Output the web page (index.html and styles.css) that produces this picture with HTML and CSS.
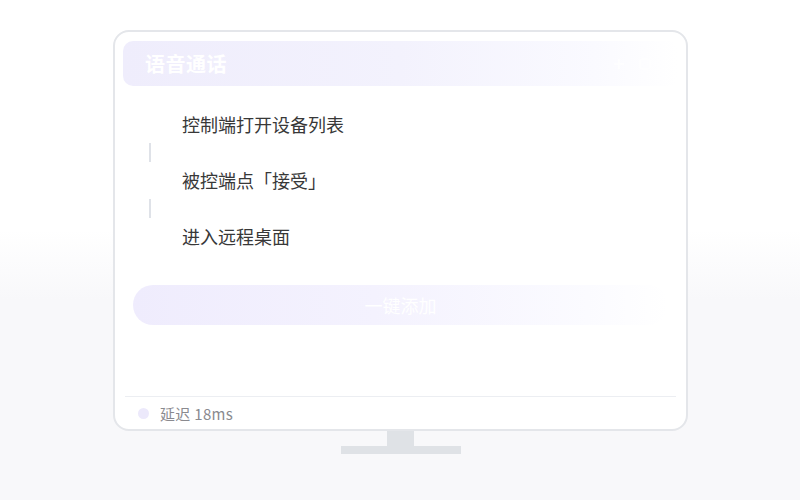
FILE: index.html
```html
<!DOCTYPE html>
<html lang="zh">
<head>
<meta charset="utf-8">
<link rel="stylesheet" href="styles.css">
</head>
<body>
<div class="scene">
  <div class="monitor">
    <div class="screen">
      <div class="header">
        <span class="title">语音通话</span>
        <span class="tools">
          <svg width="14" height="14" viewBox="0 0 14 14"><path d="M2 7h10M7 2v10" stroke="#fff" stroke-width="1.6" fill="none"/></svg>
          <svg width="14" height="14" viewBox="0 0 14 14"><rect x="2" y="2" width="10" height="10" rx="2" stroke="#fff" stroke-width="1.6" fill="none"/></svg>
        </span>
      </div>
      <div class="steps">
        <div class="step"><span class="mark"></span><span class="label">控制端打开设备列表</span></div>
        <div class="link"><span class="bar"></span></div>
        <div class="step"><span class="mark"></span><span class="label">被控端点「接受」</span></div>
        <div class="link"><span class="bar"></span></div>
        <div class="step"><span class="mark"></span><span class="label">进入远程桌面</span></div>
      </div>
      <div class="action">一键添加</div>
      <div class="footer">
        <span class="dot"></span>
        <span class="latency">延迟 18ms</span>
      </div>
    </div>
    <div class="neck"></div>
    <div class="base"></div>
  </div>
</div>
</body>
</html>
```

FILE: styles.css
```css
html, body {
  margin: 0;
  padding: 0;
}
body {
  width: 800px;
  height: 500px;
  background: linear-gradient(180deg, #ffffff 0px, #ffffff 230px, #f8f8fa 300px, #f8f8fa 500px);
  font-family: "Noto Sans CJK SC", "Noto Sans", sans-serif;
  overflow: hidden;
}
.scene {
  display: flex;
  justify-content: center;
  padding-top: 30px;
  padding-left: 1px;
}
.monitor {
  display: flex;
  flex-direction: column;
  align-items: center;
}
.screen {
  border: 2px solid #e4e6ea;
  border-radius: 16px;
  background: #ffffff;
  padding: 9px 8px 0 8px;
  display: flex;
  flex-direction: column;
  box-sizing: border-box;
  width: 575px;
  height: 401px;
}
.header {
  height: 45px;
  border-radius: 10px;
  background: linear-gradient(90deg, #efedfc 0%, #f3f2fd 50%, #fafaff 85%, #ffffff 100%);
  display: flex;
  align-items: center;
  justify-content: space-between;
  padding: 0 26px 0 22px;
  flex-shrink: 0;
}
.title {
  color: #ffffff;
  font-size: 20px;
  font-weight: 700;
  letter-spacing: 0.5px;
}
.tools {
  display: flex;
  gap: 12px;
  opacity: 0.9;
}
.steps {
  display: flex;
  flex-direction: column;
  padding-top: 26px;
  padding-left: 26px;
}
.step {
  display: flex;
  align-items: center;
  height: 24px;
}
.mark {
  width: 33px;
  flex-shrink: 0;
}
.label {
  font-size: 18px;
  color: #383838;
  line-height: 24px;
}
.link {
  height: 32px;
  display: flex;
  align-items: center;
}
.bar {
  width: 2px;
  height: 19px;
  background: #dfe2e8;
}
.action {
  margin: 37px 10px 0 10px;
  height: 40px;
  border-radius: 20px;
  background: linear-gradient(90deg, #efecfd 0%, #f4f2fe 45%, #fbfbff 85%, #ffffff 100%);
  color: #ffffff;
  font-size: 18px;
  display: flex;
  align-items: center;
  justify-content: center;
  flex-shrink: 0;
}
.footer {
  margin-top: auto;
  margin-left: 2px;
  margin-right: 2px;
  border-top: 1px solid #eceef2;
  height: 32px;
  display: flex;
  align-items: center;
  gap: 11px;
  padding-left: 13px;
}
.dot {
  width: 11px;
  height: 11px;
  border-radius: 50%;
  background: #ece9fb;
}
.latency {
  font-size: 15px;
  color: #8a8a8f;
  letter-spacing: 0.3px;
}
.neck {
  width: 27px;
  height: 15px;
  background: #dfe2e6;
}
.base {
  width: 120px;
  height: 8px;
  background: #dfe2e6;
}
```
